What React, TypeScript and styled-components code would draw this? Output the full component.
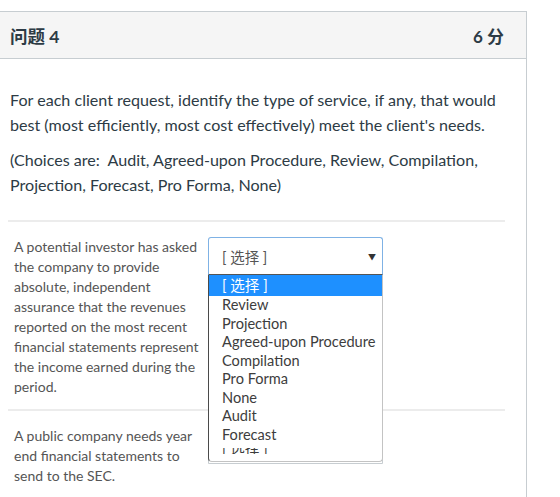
import styled, { createGlobalStyle } from 'styled-components';

const GlobalStyle = createGlobalStyle`
  body {
    margin: 0;
    background: #ffffff;
    font-family: Lato, 'Noto Sans CJK SC', sans-serif;
  }
`;

const options = [
  '[ 选择 ]',
  'Review',
  'Projection',
  'Agreed-upon Procedure',
  'Compilation',
  'Pro Forma',
  'None',
  'Audit',
  'Forecast',
];

const answers = [
  {
    text: 'A potential investor has asked the company to provide absolute, independent assurance that the revenues reported on the most recent financial statements represent the income earned during the period.',
    open: true,
  },
  {
    text: 'A public company needs year end financial statements to send to the SEC.',
    open: false,
  },
];

const SelectField = ({ open }: { open: boolean }) => (
  <SelectWrap>
    <SelectBox $focused={open}>
      <SelectText>[ 选择 ]</SelectText>
      <Arrow>▼</Arrow>
    </SelectBox>
    {open && (
      <Popup>
        {options.map((o, i) => (
          <Option key={o} $active={i === 0}>
            {o}
          </Option>
        ))}
        <ClippedOption>
          <span>[ 选择 ]</span>
        </ClippedOption>
      </Popup>
    )}
  </SelectWrap>
);

const App = () => {
  return (
    <Page>
      <GlobalStyle />
      <Question>
        <Header>
          <Title>问题 4</Title>
          <Points>6 分</Points>
        </Header>
        <Body>
          <Paragraph>
            For each client request, identify the type of service, if any, that would best (most
            efficiently, most cost effectively) meet the client's needs.
          </Paragraph>
          <Paragraph $last>
            (Choices are:&nbsp; Audit, Agreed-upon Procedure, Review, Compilation, Projection,
            Forecast, Pro Forma, None)
          </Paragraph>
          <Answers>
            {answers.map((a, i) => (
              <AnswerRow key={i} $open={a.open}>
                <Label>{a.text}</Label>
                <SelectField open={a.open} />
              </AnswerRow>
            ))}
          </Answers>
        </Body>
      </Question>
    </Page>
  );
};

const Page = styled.div`
  padding-top: 11px;
  width: 560px;
  height: 497px;
  overflow: hidden;
  box-sizing: border-box;
`;

const Question = styled.div`
  margin-left: -1px;
  width: 528px;
  border: 1px solid #c7cdd1;
  border-bottom: none;
  box-sizing: border-box;
  color: #2d3b45;
  min-height: 486px;
`;

const Header = styled.div`
  height: 46px;
  background: #f5f5f5;
  border-bottom: 1px solid #c7cdd1;
  display: flex;
  align-items: center;
  justify-content: space-between;
  padding: 0 22px 0 10px;
  box-sizing: content-box;
`;

const Title = styled.div`
  font-size: 17.5px;
  font-weight: bold;
  color: #2d3b45;
`;

const Points = styled.div`
  font-size: 17px;
  font-weight: bold;
  color: #2d3b45;
`;

const Body = styled.div`
  padding: 28px 21px 0 10px;
`;

const Paragraph = styled.p<{ $last?: boolean }>`
  margin: 0 0 ${({ $last }) => ($last ? '23px' : '10px')};
  font-size: 16.1px;
  line-height: 25px;
  color: #2d3b45;
`;

const Answers = styled.div`
  margin-left: -2px;
`;

const AnswerRow = styled.div<{ $open: boolean }>`
  display: flex;
  align-items: flex-start;
  border-top: 2px solid #ececec;
  padding: 15px 0 ${({ $open }) => ($open ? '12px' : '8px')} 6px;
  position: relative;
  z-index: ${({ $open }) => ($open ? 2 : 1)};
`;

const Label = styled.div`
  width: 188px;
  margin-right: 6px;
  font-size: 14px;
  line-height: 20px;
  color: #555555;
`;

const SelectWrap = styled.div`
  position: relative;
  width: 175px;
`;

const SelectBox = styled.div<{ $focused: boolean }>`
  height: 38px;
  box-sizing: border-box;
  border: 1px solid ${({ $focused }) => ($focused ? '#7fb2e5' : '#c7cdd1')};
  border-bottom-color: ${({ $focused }) => ($focused ? '#555555' : '#c7cdd1')};
  border-radius: 3px 3px 0 0;
  background: #ffffff;
  display: flex;
  align-items: center;
  justify-content: space-between;
  padding: 0 6px 0 13px;
`;

const SelectText = styled.span`
  font-size: 14.5px;
  color: #555555;
`;

const Arrow = styled.span`
  font-size: 8px;
  color: #333333;
`;

const Popup = styled.div`
  position: absolute;
  top: 38px;
  left: 0;
  width: 175px;
  height: 187px;
  box-sizing: border-box;
  background: #ffffff;
  border: 1px solid #c3c3c3;
  border-top: none;
  border-left: 1px solid #4a4a4a;
  border-radius: 0 0 4px 4px;
  overflow: hidden;
`;

const Option = styled.div<{ $active: boolean }>`
  height: ${({ $active }) => ($active ? '21px' : '18.5px')};
  line-height: ${({ $active }) => ($active ? '21px' : '18.5px')};
  padding-left: 13px;
  font-size: 14.6px;
  white-space: nowrap;
  color: ${({ $active }) => ($active ? '#ffffff' : '#3d3d3d')};
  background: ${({ $active }) => ($active ? '#1e90ff' : 'transparent')};
`;

const ClippedOption = styled.div`
  height: 6px;
  overflow: hidden;
  padding-left: 13px;
  font-size: 14.6px;
  color: #3d3d3d;
  margin-top: 4px;
  span {
    display: block;
    line-height: 18px;
    margin-top: -8px;
  }
`;

export default App;
